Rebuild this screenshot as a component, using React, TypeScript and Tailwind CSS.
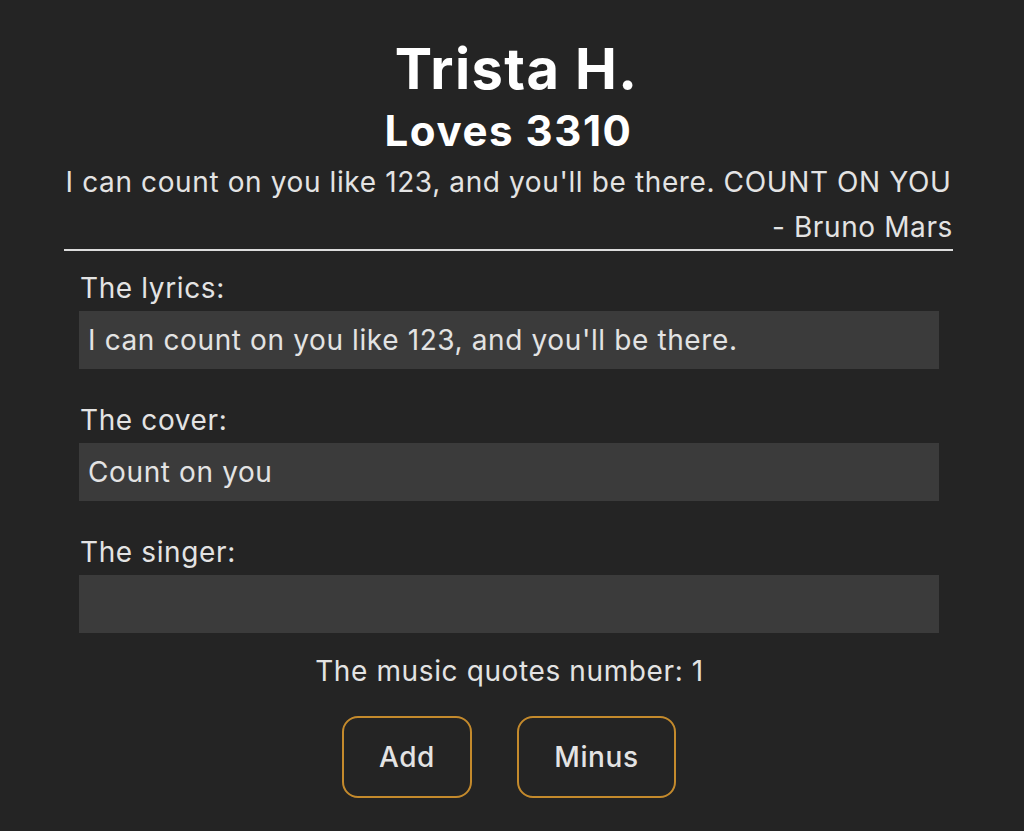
import { useState } from 'react';

const fields = [
  { label: 'The lyrics:', value: "I can count on you like 123, and you'll be there." },
  { label: 'The cover:', value: 'Count on you' },
  { label: 'The singer:', value: '' },
];

export default function App() {
  const [count, setCount] = useState(1);

  return (
    <div className="min-h-[831px] bg-[#242424] text-[#e3e3e3] font-['Inter',sans-serif] text-[28px] leading-[42px] tracking-[0.022em]">
      <div className="w-[889px] ml-[64px] pt-[41px] flex flex-col">
        <h1 className="text-center text-[56px] leading-[56px] font-bold text-white pl-[16px] tracking-[0.025em]">Trista H.</h1>
        <h2 className="mt-[13px] text-center text-[42px] leading-[42px] font-bold text-white tracking-[0.037em]">Loves 3310</h2>
        <div className="mt-[9px] pb-[1px] border-b-2 border-[#dcdcdc] text-right">
          <p className="text-center whitespace-nowrap">I can count on you like 123, and you'll be there. COUNT ON YOU</p>
          <p className="mt-[3px]">- Bruno Mars</p>
        </div>

        <div className="px-[15px] pr-[14px] pt-[16px] flex flex-col gap-[30px]">
          {fields.map((f) => (
            <label key={f.label} className="flex flex-col gap-[2px]">
              <span className="pl-[1px]">{f.label}</span>
              <input
                readOnly
                value={f.value}
                className="h-[58px] bg-[#3b3b3b] px-[9px] text-[#e3e3e3] outline-none tracking-[0.022em]"
              />
            </label>
          ))}
        </div>

        <p className="mt-[17px] text-center pl-[2px]">The music quotes number: {count}</p>

        <div className="mt-[24px] flex justify-center gap-[45px] pl-[1px]">
          <button
            onClick={() => setCount(count + 1)}
            className="w-[130px] h-[82px] rounded-[16px] border-2 border-[#c48a2c] font-medium"
          >
            Add
          </button>
          <button
            onClick={() => setCount(count - 1)}
            className="w-[159px] h-[82px] rounded-[16px] border-2 border-[#c48a2c] font-medium"
          >
            Minus
          </button>
        </div>
      </div>
    </div>
  );
}
